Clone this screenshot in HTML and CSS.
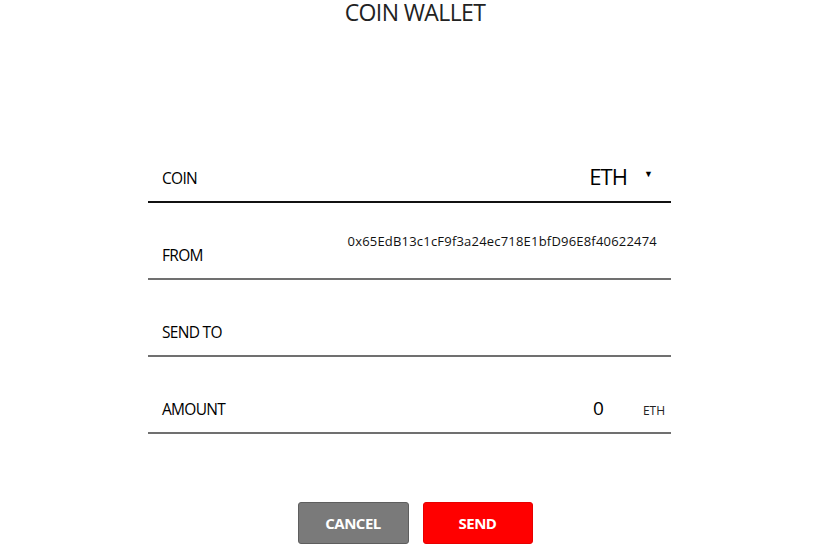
FILE: index.html
```html
<!DOCTYPE html>
<html>
<head>
<meta charset="utf-8">
<link rel="stylesheet" href="styles.css">
</head>
<body>
<div class="page">
  <h1 class="title">COIN WALLET</h1>
  <div class="form">
    <div class="row row-first">
      <span class="label">COIN</span>
      <span class="coin-select"><span class="coin-name">ETH</span><span class="caret">▼</span></span>
    </div>
    <div class="row">
      <span class="label">FROM</span>
      <span class="address">0x65EdB13c1cF9f3a24ec718E1bfD96E8f40622474</span>
    </div>
    <div class="row">
      <span class="label">SEND TO</span>
    </div>
    <div class="row">
      <span class="label">AMOUNT</span>
      <span class="amount"><span class="amount-value">0</span><span class="unit">ETH</span></span>
    </div>
  </div>
  <div class="actions">
    <button class="btn btn-cancel">CANCEL</button>
    <button class="btn btn-send">SEND</button>
  </div>
</div>
</body>
</html>
```
FILE: styles.css
```css
html, body {
  margin: 0;
  padding: 0;
  background: #fff;
}
body {
  font-family: "Open Sans", "Noto Sans", sans-serif;
  color: #000;
}
.page {
  width: 830px;
  height: 560px;
  display: flex;
  flex-direction: column;
}
.title {
  margin: 0;
  height: 28px;
  line-height: 24px;
  text-align: center;
  font-size: 23px;
  font-weight: 400;
  color: #222;
  letter-spacing: -0.6px;
}
.form {
  margin: 98px 0 0 148px;
  width: 523px;
}
.row {
  height: 77px;
  box-sizing: border-box;
  border-bottom: 2px solid #707070;
  display: flex;
  align-items: flex-end;
  justify-content: space-between;
  padding: 0 0 13px 14px;
}
.row-first {
  border-bottom-color: #111;
}
.label {
  font-size: 15.5px;
  line-height: 20px;
  font-weight: 500;
  letter-spacing: -0.7px;
}
.coin-select {
  display: flex;
  align-items: baseline;
  padding-right: 18px;
}
.coin-name {
  font-size: 22px;
  line-height: 24px;
  letter-spacing: -0.9px;
}
.caret {
  font-size: 9px;
  margin-left: 17px;
  position: relative;
  top: -8px;
}
.address {
  align-self: flex-start;
  margin-top: 29px;
  font-size: 13px;
  line-height: 18px;
  letter-spacing: 0.2px;
  padding-right: 14px;
  color: #111;
}
.amount {
  display: flex;
  align-items: baseline;
  padding-right: 6px;
}
.amount-value {
  font-size: 19px;
  line-height: 22px;
}
.unit {
  font-size: 12px;
  margin-left: 39px;
  color: #222;
}
.actions {
  display: flex;
  justify-content: center;
  gap: 14px;
  margin-top: 68px;
}
.btn {
  width: 111px;
  height: 42px;
  border-radius: 3px;
  font-family: "Open Sans", "Noto Sans", sans-serif;
  font-size: 15px;
  font-weight: 700;
  color: #fff;
  letter-spacing: -0.5px;
  cursor: pointer;
}
.btn-cancel {
  background: #7a7a7a;
  border: 1px solid #5e5e5e;
}
.btn-send {
  background: #ff0000;
  border: 1px solid #e60000;
  width: 110px;
}
```
